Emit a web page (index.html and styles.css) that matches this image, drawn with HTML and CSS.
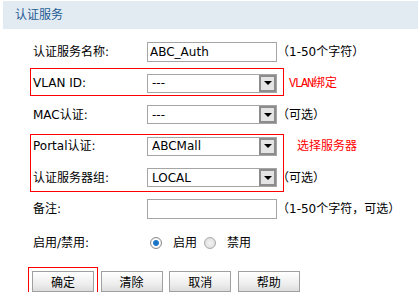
FILE: index.html
```html
<!DOCTYPE html>
<html lang="zh-CN">
  <head>
    <meta charset="UTF-8" />
    <meta name="viewport" content="width=device-width, initial-scale=1.0" />
    <title>认证服务</title>
    <link rel="stylesheet" href="styles.css">
  </head>
  <body>
    <div class="panel">
      <div class="panel-title">认证服务</div>

      <form class="form">
        <div class="row">
          <label class="label">认证服务名称:</label>
          <input class="text" type="text" value="ABC_Auth" />
          <span class="hint">（1-50个字符）</span>
        </div>

        <div class="group group-vlan">
          <div class="row">
            <label class="label">VLAN ID:</label>
            <div class="select"><span class="value">---</span><i class="arrow"></i></div>
            <span class="note note-vlan"><span class="latin">VLAN</span>绑定</span>
          </div>
        </div>

        <div class="row">
          <label class="label">MAC认证:</label>
          <div class="select"><span class="value">---</span><i class="arrow"></i></div>
          <span class="hint">（可选）</span>
        </div>

        <div class="group group-server">
          <div class="row">
            <label class="label">Portal认证:</label>
            <div class="select"><span class="value">ABCMall</span><i class="arrow"></i></div>
            <span class="note note-server">选择服务器</span>
          </div>
          <div class="row">
            <label class="label">认证服务器组:</label>
            <div class="select"><span class="value">LOCAL</span><i class="arrow"></i></div>
            <span class="hint">（可选）</span>
          </div>
        </div>

        <div class="row">
          <label class="label">备注:</label>
          <input class="text" type="text" value="" />
          <span class="hint">（1-50个字符，可选）</span>
        </div>

        <div class="row row-radio">
          <label class="label">启用/禁用:</label>
          <input class="radio" type="radio" name="state" checked />
          <span class="radio-text">启用</span>
          <input class="radio" type="radio" name="state" />
          <span class="radio-text">禁用</span>
        </div>

        <div class="buttons">
          <button type="button" class="btn btn-main">确定</button>
          <button type="button" class="btn">清除</button>
          <button type="button" class="btn">取消</button>
          <button type="button" class="btn">帮助</button>
        </div>
      </form>
    </div>
  </body>
</html>
```

FILE: styles.css
```css
* {
  margin: 0;
  padding: 0;
  box-sizing: border-box;
}

body {
  font-family: "DejaVu Sans", "Noto Sans CJK SC", sans-serif;
  font-size: 12px;
  line-height: 1;
  color: #000;
  background-color: #fff;
}

.panel {
  padding: 1px 0 0 3px;
}

.panel-title {
  height: 28px;
  line-height: 28px;
  padding-left: 12px;
  background-color: #e3ebf2;
  color: #1d5b95;
  font-size: 12px;
}

.form {
  padding-top: 7px;
}

.row {
  display: flex;
  align-items: center;
  height: 31.5px;
  padding-left: 30px;
}

.label {
  width: 114px;
  flex-shrink: 0;
}

.text {
  width: 130px;
  height: 20px;
  padding: 0 2px;
  border: 1px solid #a5a5a5;
  font-family: inherit;
  font-size: 12px;
  color: #000;
  outline: none;
}

.select {
  display: flex;
  align-items: center;
  justify-content: space-between;
  width: 130px;
  height: 19px;
  border: 1px solid #a5a5a5;
  background-color: #fff;
}

.select .value {
  padding-left: 4px;
}

.arrow {
  display: flex;
  align-items: center;
  justify-content: center;
  width: 17px;
  height: 17px;
  border: 2px solid #8c8c8c;
  background-color: #e4e4e4;
}

.arrow::after {
  content: "";
  border-left: 4px solid transparent;
  border-right: 4px solid transparent;
  border-top: 4px solid #000;
}

.hint {
  margin-left: 0;
}

.note {
  color: #f00;
}

.note-vlan {
  margin-left: 12px;
}

.note-vlan .latin {
  font-family: "Liberation Mono", monospace;
  letter-spacing: -1.2px;
}

.note-server {
  margin-left: 20px;
}

/* red marks round the rows in question */
.group {
  position: relative;
}

.group::before {
  content: "";
  position: absolute;
  left: 27px;
  width: 252px;
  border: 1px solid #f00;
  pointer-events: none;
}

.group-vlan::before {
  top: 0;
  bottom: 3px;
}

.group-server::before {
  top: 3px;
  bottom: 2px;
}

.row-radio {
  height: 36px;
}

.radio {
  appearance: none;
  width: 12px;
  height: 12px;
  margin-left: 3px;
  border: 1px solid #a9a9a9;
  border-radius: 50%;
  background: radial-gradient(circle, #f4f4f4 0, #d9d9d9 100%);
}

.radio:checked {
  border-color: #8a8a8a;
  background: radial-gradient(circle, #1b6fc0 0, #1f79c9 2.5px, #fff 3.5px, #dcdcdc 100%);
}

.radio + .radio-text {
  margin-left: 11px;
}

.radio-text + .radio {
  margin-left: 7px;
}

.buttons {
  display: flex;
  gap: 6.6px;
  margin-top: 10px;
  padding-left: 29px;
}

.btn {
  width: 62px;
  height: 21px;
  border: 1px solid #a0a0a0;
  background: linear-gradient(#ffffff, #ebebeb 70%, #dcdcdc);
  font-family: inherit;
  font-size: 12px;
  color: #000;
  cursor: pointer;
}

.btn-main {
  outline: 1px solid #f00;
  outline-offset: 3px;
}
```
